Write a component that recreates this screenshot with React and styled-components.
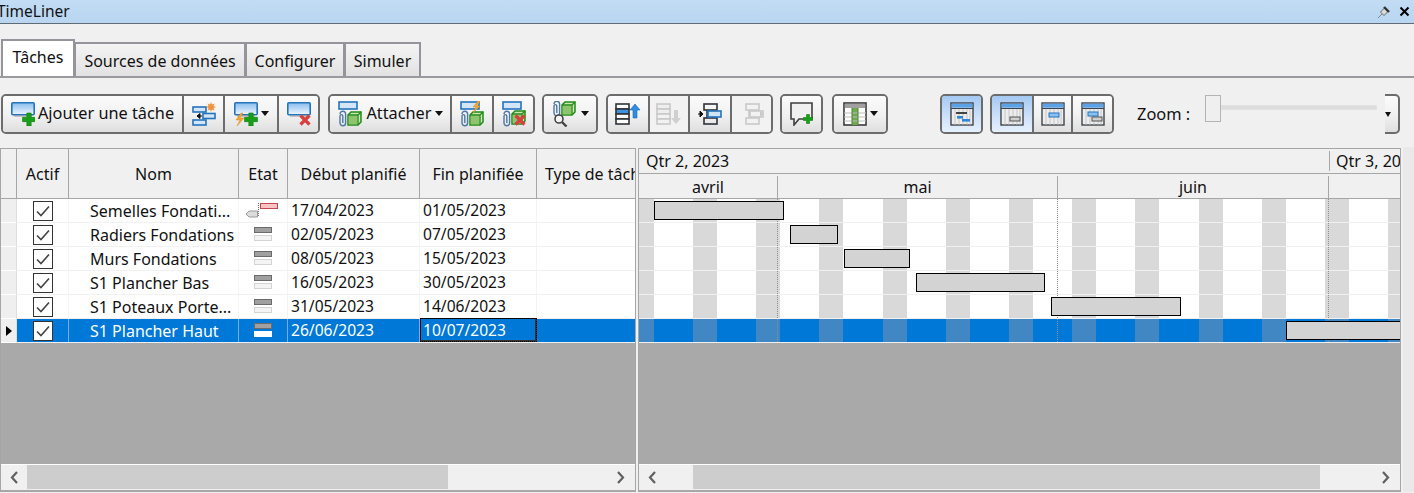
import React from "react";
import styled, { createGlobalStyle } from "styled-components";

const Global = createGlobalStyle`
  html, body { margin: 0; padding: 0; background: #f0f0f0; }
  * { box-sizing: border-box; }
`;

const Window = styled.div`
  width: 1414px; height: 493px; overflow: hidden; background: #f0f0f0;
  display: flex; flex-direction: column;
  font-family: "Noto Sans", "Open Sans", sans-serif; font-size: 16px; color: #111;
`;
const TitleBar = styled.div`
  height: 24px; flex: none; display: flex; align-items: center; justify-content: space-between;
  background: linear-gradient(#c2dcf4, #b9d5f0); border-bottom: 1px solid #5f6b76;
  padding-right: 4px; overflow: hidden;
`;
const TitleText = styled.span` margin-left: -3px; font-size: 15.5px; padding-bottom: 1px; `;
const TitleIcons = styled.div` display: flex; align-items: center; gap: 8px; `;
const TabStrip = styled.div`
  height: 54px; flex: none; display: flex; align-items: flex-end; padding-left: 1px;
  border-bottom: 2px solid #9a9a9e;
`;
const Tab = styled.div`
  height: ${p => (p.$active ? 37 : 34)}px; width: ${p => p.$w}px;
  display: flex; align-items: center; justify-content: center;
  border: 2px solid #94949a; border-bottom: none;
  margin-right: -1px;
  background: ${p => (p.$active ? "#fff" : "linear-gradient(#f4f4f4, #e2e2e2)")};
  padding-bottom: ${p => (p.$active ? 3 : 0)}px;
  padding-top: ${p => (p.$active ? 0 : 1)}px;
`;
const Toolbar = styled.div`
  height: 70px; flex: none; padding: 16px 0 0 1px; display: flex; align-items: flex-start;
`;
const Group = styled.div`
  height: 40px; display: flex; border: 2px solid #6c6c6c; border-radius: 5px; overflow: hidden;
  margin-left: ${p => p.$ml || 0}px; flex: none;
`;
const Btn = styled.div`
  width: ${p => p.$w}px; height: 100%; flex: none; display: flex; align-items: center; justify-content: center; gap: 3px;
  background: ${p => p.$on ? "linear-gradient(#a4c8f2, #cfe2fa 60%, #e6f0fc)" : p.$off ? "#f2f2f2" : "linear-gradient(#fbfbfb, #f2f2f2 50%, #dfdfdf)"};
  border-right: ${p => p.$last ? "none" : "2px solid #6c6c6c"};
  padding-bottom: 1px;
`;
const BtnLabel = styled.span` font-size: 16.3px; margin-bottom: 2px; white-space: nowrap; `;
const Caret = styled.i`
  width: 0; height: 0; border-left: 4.5px solid transparent; border-right: 4.5px solid transparent;
  border-top: 5px solid #111; display: block;
`;
const ZoomLabel = styled.span` margin: 8px 0 0 23px; width: 68px; font-size: 16.4px; flex: none; `;
const Slider = styled.div`
  position: relative; width: 173px; height: 27px; margin-top: 1px; flex: none;
`;
const SliderTrack = styled.div`
  position: absolute; left: 16px; right: 1px; top: 10px; height: 5px; background: #dcdddc; border: 1px solid #e2e2e2;
`;
const SliderThumb = styled.div`
  position: absolute; left: 0; top: 0; width: 16px; height: 27px; background: #efefef; border: 1px solid #b4b4b4;
`;
const OverflowBtn = styled.div`
  width: 15px; height: 40px; margin-left: 7px; flex: none; display: flex; align-items: center;
  background: linear-gradient(#fbfbfb, #f2f2f2 50%, #dfdfdf);
  border: 2px solid #6c6c6c; border-left: none; border-radius: 0 5px 5px 0;
  & > i { margin-left: 0; border-left-width: 3px; border-right-width: 3px; border-top-width: 5px; }
`;
const Panes = styled.div` height: 344px; flex: none; display: flex; gap: 2px; `;
const Pane = styled.div`
  width: ${p => p.$w}px; height: 100%; flex: none; display: flex; flex-direction: column;
  border: 1px solid #a6a6a6; background: #a9a9a9; overflow: hidden; position: relative;
`;
const HeaderRow = styled.div`
  display: grid; grid-template-columns: 16px 52px 170px 49px 132px 117px 98px; height: 50px; flex: none;
  background: #f0f0f0; border-bottom: 1px solid #a6a6a6;
`;
const HeadCell = styled.div`
  display: flex; align-items: center; justify-content: center; white-space: nowrap; overflow: hidden;
  border-right: 1px solid #a6a6a6; padding-top: 1px;
  &:last-child { border-right: none; justify-content: flex-start; padding-left: 8px; }
`;
const Row = styled.div`
  display: grid; grid-template-columns: 16px 52px 170px 49px 132px 117px 98px; height: 24px; flex: none;
  background: ${p => p.$sel ? "#0078d7" : "#fff"}; color: ${p => p.$sel ? "#fff" : "#111"};
  border-bottom: 1px solid ${p => p.$sel ? "#f0f0f0" : "#f1f1f1"};
`;
const RowHead = styled.div`
  background: #efefef; display: flex; align-items: center; padding-left: 5px;
  border-bottom: 1px solid #fff; margin-bottom: -1px; border-right: 1px solid #dedede;
`;
const Cell = styled.div`
  display: flex; align-items: center; white-space: nowrap; overflow: hidden;
  justify-content: ${p => p.$center ? "center" : "flex-start"};
  padding-left: ${p => p.$pl || 0}px;
  border-right: 1px solid ${p => p.$sel ? "#74ade4" : "#f4f4f4"};
  &:last-child { border-right: none; }
`;
const DateCell = styled(Cell)`
  padding-left: ${p => p.$focus ? 2 : 3}px; font-size: 15.6px; padding-bottom: 1px;
  ${p => p.$focus ? "outline: 1px dotted #000; outline-offset: -1px; border: 1px solid #111; border-right: 2px solid #333; border-bottom: 2px solid #333; margin-top: -1px; padding-bottom: 0;" : ""}
`;
const Check = styled.div`
  width: 20px; height: 20px; background: #fff; border: 1px solid #333; display: flex; align-items: center; justify-content: center;
`;
const Triangle = styled.i`
  display: block; width: 0; height: 0; border-top: 5px solid transparent; border-bottom: 5px solid transparent; border-left: 6px solid #000;
`;
const Filler = styled.div` flex: 1; `;
const ScrollBar = styled.div`
  height: 25px; flex: none; display: flex; background: #f0f0f0; align-items: stretch;
  border-top: 1px solid #fff; margin-bottom: 1px; box-sizing: content-box;
`;
const ScrollEnd = styled.div` width: ${p => p.$w}px; flex: none; display: flex; align-items: center; justify-content: center; `;
const ScrollTrack = styled.div` flex: 1; display: flex; `;
const ScrollThumb = styled.div` width: ${p => p.$w}px; margin-left: ${p => p.$ml || 0}px; background: #cdcdcd; height: 24px; `;
const Quarter = styled.div` height: 25px; flex: none; display: flex; background: #f0f0f0; border-bottom: 1px solid #a6a6a6; `;
const QuarterCell = styled.div`
  width: ${p => p.$w}px; flex: none; padding-left: ${p => p.$pl}px; display: flex; align-items: center; white-space: nowrap; overflow: hidden;
  padding-bottom: 1px;
  ${p => p.$div ? "position: relative; &::before { content: ''; position: absolute; left: 0; top: 2px; bottom: 2px; width: 1px; background: #a6a6a6; }" : ""}
`;
const Months = styled.div` height: 25px; flex: none; display: flex; background: #f0f0f0; border-bottom: 1px solid #a6a6a6; `;
const Month = styled.div`
  width: ${p => p.$w}px; flex: none; display: flex; align-items: center; justify-content: center;
  border-right: 1px solid #a6a6a6; margin-top: 2px; padding-bottom: 1px;
  &:last-child { border-right: none; }
`;
const GanttBody = styled.div` position: relative; flex: none; `;
const GanttRow = styled.div`
  height: 24px; position: relative; border-bottom: 1px solid #f0f0f0;
  background-color: ${p => p.$sel ? "#0078d7" : "#fff"};
  background-image: repeating-linear-gradient(90deg, ${p => p.$sel ? "#4187c4" : "#d9d9d9"} -9.2px 14.8px, transparent 14.8px 54px);
`;
const Bar = styled.div`
  position: absolute; top: 2px; height: 19px; background: #d3d3d3; border: 1px solid #000; z-index: 2;
`;
const MonthLine = styled.div`
  position: absolute; top: 0; height: 143px; width: 0; border-left: 1px dotted #8f8f8f; z-index: 1;
`;
const Side = styled.div` flex: 1; background: #e9e9e9; margin: -1px 0 0; `;

const Plus = ({ x, y, s = 12, c = "#17a017" }) => (
  <path d={`M${x - s / 6} ${y - s / 2}h${s / 3}v${s / 3}h${s / 3}v${s / 3}h${-s / 3}v${s / 3}h${-s / 3}v${-s / 3}h${-s / 3}v${-s / 3}h${s / 3}z`} fill={c} stroke="#0e7a12" strokeWidth=".6" />
);
const Cross = ({ x, y, s = 5 }) => (
  <path d={`M${x - s} ${y - s}L${x + s} ${y + s}M${x + s} ${y - s}L${x - s} ${y + s}`} stroke="#d6403e" strokeWidth="3.2" />
);
const BlueRect = ({ x, y, w, h }) => (
  <rect x={x} y={y} width={w} height={h} fill="#d3e6f8" stroke="#2474bd" strokeWidth="1.6" />
);
const Screen = () => (
  <>
    <defs>
      <linearGradient id="scr" x1="0" y1="0" x2="0" y2="1">
        <stop offset="0" stopColor="#8abdee" />
        <stop offset="1" stopColor="#eef6fd" />
      </linearGradient>
    </defs>
    <rect x=".8" y=".8" width="22.4" height="12" rx="1" fill="url(#scr)" stroke="#2474bd" strokeWidth="1.6" />
    <rect x="3" y="13.2" width="18" height="1.6" fill="#8a8a8a" opacity=".55" />
  </>
);
const Svg = ({ w = 24, h = 24, children }) => <svg width={w} height={h} viewBox={`0 0 ${w} ${h}`}>{children}</svg>;

const AddIcon = () => <Svg><Screen /><Plus x={18} y={17.5} s={13} /></Svg>;
const LinkIcon = () => (
  <Svg>
    <BlueRect x={1} y={5} w={13} h={5} />
    <BlueRect x={1} y={18} w={13} h={5} />
    <BlueRect x={11} y={11.5} w={12} h={5} />
    <path d="M10 14H5M5 14l3-2.5v5z" stroke="#111" fill="#111" strokeWidth="1" />
    <path d="M19 0l1 2.5 2.5-1-1 2.5 2.5 1-2.5 1 1 2.5-2.5-1-1 2.5-1-2.5-2.5 1 1-2.5-2.5-1 2.5-1-1-2.5 2.5 1z" fill="#f2933a" />
  </Svg>
);
const AddBoltIcon = () => (
  <Svg>
    <Screen />
    <path d="M7 11L2 18h4l-3 6 7-8H6l3-5z" fill="#f0a830" stroke="#d98a1c" strokeWidth=".5" />
    <Plus x={17} y={17.5} s={13} />
  </Svg>
);
const DelIcon = () => <Svg><Screen /><Cross x={18} y={18} s={4.5} /></Svg>;
const Clip = ({ x = 2, y = 11 }) => (
  <path transform={`translate(${x} ${y})`} d="M1 3a2.8 2.8 0 0 1 5.6 0v9a2.8 2.8 0 0 1-5.6 0V5a1.4 1.4 0 0 1 2.8 0v7" fill="none" stroke="#4f78a6" strokeWidth="1.4" />
);
const Cube = ({ x = 11, y = 9, c = "#8fc46f" }) => (
  <g transform={`translate(${x} ${y})`}>
    <path d="M0 3l3-3h10v10l-3 3H0z" fill="#cfe6b8" stroke="#1f8a14" strokeWidth="1.5" />
    <path d="M.8 3.8h8.5v8.5H.8z" fill={c} />
    <path d="M10 3l3-3M0 3h10v10" fill="none" stroke="#1f8a14" strokeWidth="1.3" />
  </g>
);
const AttachIcon = () => (
  <Svg w={26} h={26}>
    <BlueRect x={2} y={1} w={18} h={7} />
    <Clip x={2} y={10} />
    <Cube x={11} y={11} />
  </Svg>
);
const AttachBoltIcon = () => (
  <Svg w={26} h={26}>
    <BlueRect x={2} y={1} w={18} h={7} />
    <Clip x={2} y={10} />
    <Cube x={11} y={11} />
    <path d="M19 0l-5 6h3l-3 6 7-7h-3l3-5z" fill="#f0a830" stroke="#d98a1c" strokeWidth=".4" />
  </Svg>
);
const AttachDelIcon = () => (
  <Svg w={26} h={26}>
    <BlueRect x={2} y={1} w={18} h={7} />
    <Clip x={2} y={10} />
    <Cube x={11} y={10} />
    <Cross x={19} y={19} s={4.5} />
  </Svg>
);
const SearchIcon = () => (
  <Svg w={26} h={26}>
    <Clip x={1} y={0} />
    <Cube x={10} y={1} />
    <circle cx="7" cy="18" r="4" fill="#f4f4f4" stroke="#444" strokeWidth="1.6" />
    <path d="M10 21l4.5 4.5" stroke="#444" strokeWidth="2.4" />
  </Svg>
);
const Stack = ({ arrowUp, off }) => {
  const c = off ? "#c9c9c9" : "#2f3338";
  return (
    <Svg w={26} h={22}>
      <g fill={off ? "#f2f2f2" : "#fff"} stroke={c} strokeWidth="1.6">
        <rect x="1" y="1" width="13" height="5" fill={off ? "#eee" : "#fff"} />
        <rect x="1" y="6" width="13" height="5" fill={off ? "#eee" : "#3d93e0"} />
        <rect x="1" y="11" width="13" height="5" />
        <rect x="1" y="16" width="13" height="5" />
      </g>
      {arrowUp
        ? <path d="M20 1l5 6h-3v8h-4V7h-3z" fill="#2d8de0" stroke="#1c68b0" strokeWidth=".6" />
        : <path d="M20 21l5-6h-3V7h-4v8h-3z" fill="#cfcfcf" />}
    </Svg>
  );
};
const Indent = ({ off }) => {
  const c = off ? "#c9c9c9" : "#2f3338";
  return (
    <Svg w={26} h={22}>
      <g fill="none" stroke={c} strokeWidth="1.6">
        <rect x="7" y="1" width="13" height="6" />
        <rect x="7" y="15" width="13" height="6" />
        <path d="M10 7v8M16 7v8" />
      </g>
      <rect x="11" y="8" width="13" height="6" fill={off ? "#f2f2f2" : "#cfe4f8"} stroke={off ? "#c9c9c9" : "#2474bd"} strokeWidth="1.6" />
      {off
        ? <path d="M25 11l-4-3v6z" fill="#c9c9c9" />
        : <path d="M1 11h5M6 11l-3-3v6z" fill="#111" stroke="#111" />}
    </Svg>
  );
};
const CommentIcon = () => (
  <Svg>
    <path d="M1 1h21v16H9l-5 6v-6H1z" fill="#f0f0f0" stroke="#3f3f3f" strokeWidth="1.6" />
    <Plus x={18} y={17} s={9} />
  </Svg>
);
const TableIcon = () => (
  <Svg>
    <rect x="1" y="1" width="22" height="22" fill="#fff" stroke="#3a3a3a" strokeWidth="1.6" />
    <rect x="1.8" y="1.8" width="20.4" height="4.2" fill="#a0a0a0" />
    <rect x="9" y="6" width="6" height="17" fill="#6faa4f" />
    <path d="M1 11h22M1 15h22M1 19h22" stroke="#bcbcbc" strokeWidth="1" />
    <path d="M9 6v17M15 6v17" stroke="#4f7f3a" strokeWidth="1" />
  </Svg>
);
const ViewIcon = ({ kind }) => (
  <Svg>
    <rect x="1" y="1" width="22" height="22" fill="#ededed" stroke="#3f434a" strokeWidth="1.4" />
    <rect x="1.7" y="1.7" width="20.6" height="4" fill="#5ba3e6" />
    <path d="M1 6.5h22" stroke="#3f434a" strokeWidth="1.2" />
    <path d="M5 7v16M9 7v16M13 7v16M17 7v16M20 7v16" stroke="#bdbdbd" strokeWidth=".8" />
    {kind === "all" && <><path d="M6 11h11" stroke="#444" strokeWidth="1.8" /><rect x="7" y="14" width="6" height="2.6" fill="#2f86d8" /><rect x="12" y="17" width="8" height="2.6" fill="#2f86d8" /></>}
    {kind === "gray" && <rect x="10" y="15" width="10" height="4" fill="#cfcfcf" stroke="#555" />}
    {kind === "blue" && <rect x="8" y="11" width="10" height="4" fill="#8cc2f0" stroke="#2474bd" />}
    {kind === "both" && <><rect x="7" y="10" width="10" height="4" fill="#8cc2f0" stroke="#2474bd" /><rect x="11" y="15" width="10" height="4" fill="#cfcfcf" stroke="#555" /></>}
  </Svg>
);
const Pin = () => (
  <svg width="14" height="14" viewBox="0 0 14 14">
    <path d="M1 13l4-4" stroke="#888" strokeWidth="1" />
    <path d="M3.5 7l4-4 3.5 3.5-4 4z" fill="#dcdcdc" stroke="#666" />
    <path d="M7 2l5 5" stroke="#333" strokeWidth="2.4" />
  </svg>
);
const CloseX = () => (
  <svg width="11" height="11" viewBox="0 0 11 11"><path d="M1.5 1.5l8 8M9.5 1.5l-8 8" stroke="#000" strokeWidth="2" /></svg>
);
const CheckMark = () => (
  <svg width="14" height="12" viewBox="0 0 14 12"><path d="M1 6.5l4 4 8-9" fill="none" stroke="#444" strokeWidth="1.6" /></svg>
);
const StatusIcon = ({ first, sel }) => first ? (
  <svg width="36" height="20" viewBox="0 0 36 20">
    <rect x="15.5" y="2.5" width="17" height="5" fill="#fbc4c4" stroke="#c2484c" />
    <path d="M13.5 2v13" stroke="#777" strokeDasharray="1 1" />
    <path d="M1 13l3-3h8.5v6H4z" fill="#dcdcdc" stroke="#9a9a9a" />
  </svg>
) : (
  <svg width="18" height="15" viewBox="0 0 18 15">
    <rect x=".5" y=".5" width="17" height="5" fill="#a0a0a0" stroke="#6b6b6b" />
    <rect x=".5" y="8.5" width="17" height="5" fill={sel ? "#fff" : "#f4f4f4"} stroke={sel ? "#fff" : "#d4d4d4"} />
  </svg>
);
const Chevron = ({ left }) => (
  <svg width="9" height="13" viewBox="0 0 9 13">
    <path d={left ? "M7 1L2 6.5l5 5.5" : "M2 1l5 5.5L2 12"} fill="none" stroke="#606060" strokeWidth="2.2" />
  </svg>
);

const tasks = [
  ["Semelles Fondati...", "17/04/2023", "01/05/2023", 15, 130],
  ["Radiers Fondations", "02/05/2023", "07/05/2023", 151, 48],
  ["Murs Fondations", "08/05/2023", "15/05/2023", 205, 66],
  ["S1 Plancher Bas", "16/05/2023", "30/05/2023", 277, 129],
  ["S1 Poteaux Porte...", "31/05/2023", "14/06/2023", 412, 130],
  ["S1 Plancher Haut", "26/06/2023", "10/07/2023", 647, 130],
];

export default function App() {
  return (
    <Window>
      <Global />
      <TitleBar>
        <TitleText>TimeLiner</TitleText>
        <TitleIcons><Pin /><CloseX /></TitleIcons>
      </TitleBar>
      <TabStrip>
        <Tab $active $w={74}>Tâches</Tab>
        <Tab $w={172}>Sources de données</Tab>
        <Tab $w={100}>Configurer</Tab>
        <Tab $w={77}>Simuler</Tab>
      </TabStrip>
      <Toolbar>
        <Group>
          <Btn $w={181}><AddIcon /><BtnLabel>Ajouter une tâche</BtnLabel></Btn>
          <Btn $w={41}><LinkIcon /></Btn>
          <Btn $w={54}><AddBoltIcon /><Caret /></Btn>
          <Btn $w={39} $last><DelIcon /></Btn>
        </Group>
        <Group $ml={8}>
          <Btn $w={122}><AttachIcon /><BtnLabel>Attacher</BtnLabel><Caret /></Btn>
          <Btn $w={42}><AttachBoltIcon /></Btn>
          <Btn $w={39} $last><AttachDelIcon /></Btn>
        </Group>
        <Group $ml={7}>
          <Btn $w={52} $last><SearchIcon /><Caret /></Btn>
        </Group>
        <Group $ml={8}>
          <Btn $w={42}><Stack arrowUp /></Btn>
          <Btn $w={40} $off><Stack off /></Btn>
          <Btn $w={42}><Indent /></Btn>
          <Btn $w={39} $last $off><Indent off /></Btn>
        </Group>
        <Group $ml={7}>
          <Btn $w={39} $last><CommentIcon /></Btn>
        </Group>
        <Group $ml={9}>
          <Btn $w={52} $last><TableIcon /><Caret /></Btn>
        </Group>
        <Group $ml={52}>
          <Btn $w={39} $last $on><ViewIcon kind="all" /></Btn>
        </Group>
        <Group $ml={7}>
          <Btn $w={42} $on><ViewIcon kind="gray" /></Btn>
          <Btn $w={39}><ViewIcon kind="blue" /></Btn>
          <Btn $w={39} $last><ViewIcon kind="both" /></Btn>
        </Group>
        <ZoomLabel>Zoom :</ZoomLabel>
        <Slider><SliderTrack /><SliderThumb /></Slider>
        <OverflowBtn><Caret /></OverflowBtn>
      </Toolbar>
      <Panes>
        <Pane $w={636}>
          <HeaderRow>
            <HeadCell />
            <HeadCell>Actif</HeadCell>
            <HeadCell>Nom</HeadCell>
            <HeadCell>Etat</HeadCell>
            <HeadCell>Début planifié</HeadCell>
            <HeadCell>Fin planifiée</HeadCell>
            <HeadCell>Type de tâche</HeadCell>
          </HeaderRow>
          {tasks.map((t, i) => {
            const sel = i === 5;
            return (
              <Row key={t[0]} $sel={sel}>
                <RowHead>{sel && <Triangle />}</RowHead>
                <Cell $center $sel={sel}><Check><CheckMark /></Check></Cell>
                <Cell $pl={21} $sel={sel}>{t[0]}</Cell>
                <Cell $center $sel={sel}><StatusIcon first={i === 0} sel={sel} /></Cell>
                <DateCell $sel={sel}>{t[1]}</DateCell>
                <DateCell $sel={sel} $focus={sel}>{t[2]}</DateCell>
                <Cell $sel={sel} />
              </Row>
            );
          })}
          <Filler />
          <ScrollBar>
            <ScrollEnd $w={26}><Chevron left /></ScrollEnd>
            <ScrollTrack><ScrollThumb $w={421} /></ScrollTrack>
            <ScrollEnd $w={30}><Chevron /></ScrollEnd>
          </ScrollBar>
        </Pane>
        <Pane $w={763}>
          <Quarter>
            <QuarterCell $w={690} $pl={7}>Qtr 2, 2023</QuarterCell>
            <QuarterCell $w={71} $pl={7} $div>Qtr 3, 2023</QuarterCell>
          </Quarter>
          <Months>
            <Month $w={139}>avril</Month>
            <Month $w={280}>mai</Month>
            <Month $w={271}>juin</Month>
            <Month $w={71} />
          </Months>
          <GanttBody>
            <MonthLine style={{ left: 138 }} />
            <MonthLine style={{ left: 418 }} />
            <MonthLine style={{ left: 689 }} />
            {tasks.map((t, i) => (
              <GanttRow key={t[0]} $sel={i === 5}>
                <Bar style={{ left: t[3], width: t[4] }} />
              </GanttRow>
            ))}
          </GanttBody>
          <Filler />
          <ScrollBar>
            <ScrollEnd $w={27}><Chevron left /></ScrollEnd>
            <ScrollTrack><ScrollThumb $ml={27} $w={627} /></ScrollTrack>
            <ScrollEnd $w={29}><Chevron /></ScrollEnd>
          </ScrollBar>
        </Pane>
        <Side />
      </Panes>
    </Window>
  );
}
